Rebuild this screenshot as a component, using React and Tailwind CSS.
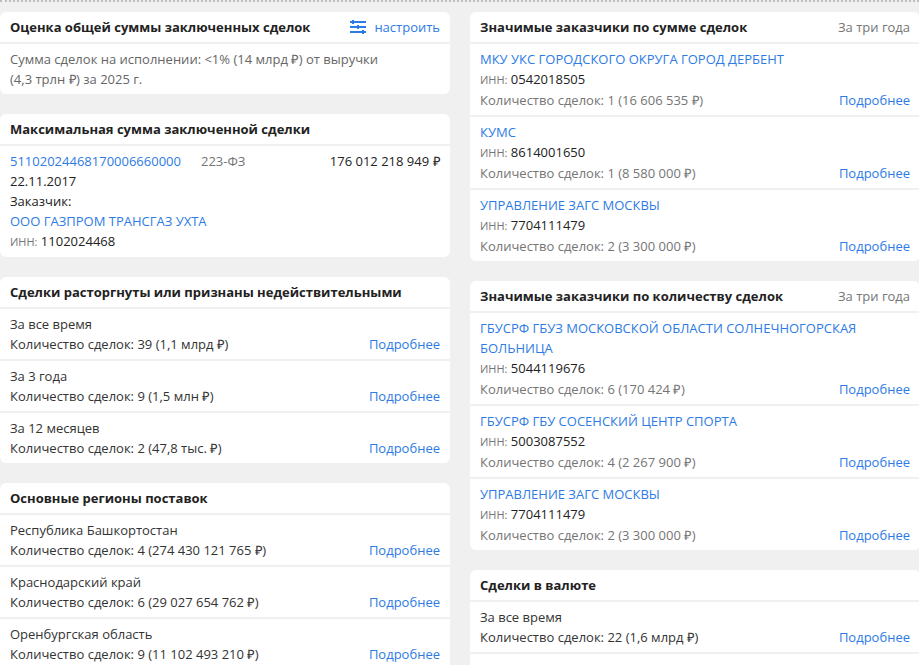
import React from 'react';

// the ruble glyph is a touch narrower in the original
const Ruble = () => <span className="tracking-[-0.5px]">₽</span>;

const Card = ({ title, right, children }) => (
  <div className="bg-white rounded-[6px] overflow-hidden mb-5">
    <div className="flex justify-between items-center h-[32px] px-[10px] border-b-2 border-[#f0f0f0]">
      <h3 className="font-bold text-[#222222]">{title}</h3>
      {right}
    </div>
    {children}
  </div>
);

const More = () => <a className="text-[#2d7be5]">Подробнее</a>;

const Inn = ({ value }) => (
  <div className="text-[#757575]">
    <span className="text-[11px] leading-none">ИНН:</span> <span className="text-[#222222]">{value}</span>
  </div>
);

// "За все время" + deals count row
const StatRow = ({ label, count, last }) => (
  <div className={`px-[10px] py-[5px] ${last ? '' : 'border-b-2 border-[#f0f0f0]'}`}>
    <div className="text-[#333333]">{label}</div>
    <div className="flex justify-between text-[#333333]">
      <span>{count}</span>
      <More />
    </div>
  </div>
);

const CustomerRow = ({ name, inn, count, last }) => (
  <div className={`px-[10px] py-[5px] ${last ? '' : 'border-b-2 border-[#f0f0f0]'}`}>
    <a className="block text-[#2d7be5]">{name}</a>
    <Inn value={inn} />
    <div className="flex justify-between text-[#757575] mt-px">
      <span>{count}</span>
      <More />
    </div>
  </div>
);

const SettingsIcon = () => (
  <svg width="16" height="14" viewBox="0 0 16 14" className="mr-[8px]" fill="#2d7be5">
    <rect x="0" y="1" width="16" height="2" />
    <rect x="0" y="6" width="16" height="2" />
    <rect x="0" y="11" width="16" height="2" />
    <rect x="2" y="0" width="2" height="4" />
    <rect x="7" y="5" width="2" height="4" />
    <rect x="12" y="10" width="2" height="4" />
  </svg>
);

export default function App() {
  return (
    <div className="h-[665px] w-[919px] overflow-hidden bg-[#f0f0f0] text-[13px] leading-5 font-['Open_Sans',sans-serif]">
      <div className="border-t-2 border-dotted border-[#bdbdbd]" />
      <div className="flex gap-5 w-[920px] pt-[10px]">
        <div className="w-[450px] shrink-0">
          <Card
            title="Оценка общей суммы заключенных сделок"
            right={
              <div className="flex items-center">
                <SettingsIcon />
                <a className="text-[#2d7be5]">настроить</a>
              </div>
            }
          >
            <div className="px-[10px] py-[5px] text-[#666666]">
              Сумма сделок на исполнении: &lt;1% (14 млрд <Ruble />) от выручки
              <br />
              (4,3 трлн <Ruble />) за 2025 г.
            </div>
          </Card>

          <Card title="Максимальная сумма заключенной сделки">
            <div className="px-[10px] pt-[5px] pb-[6px] text-[#222222]">
              <div className="flex">
                <a className="text-[#2d7be5] w-[191px]">51102024468170006660000</a>
                <span className="text-[#757575]">223-ФЗ</span>
                <span className="ml-auto">176 012 218 949 <Ruble /></span>
              </div>
              <div>22.11.2017</div>
              <div>Заказчик:</div>
              <a className="block text-[#2d7be5]">ООО ГАЗПРОМ ТРАНСГАЗ УХТА</a>
              <Inn value="1102024468" />
            </div>
          </Card>

          <Card title="Сделки расторгнуты или признаны недействительными">
            <StatRow label="За все время" count={<>Количество сделок: 39 (1,1 млрд <Ruble />)</>} />
            <StatRow label="За 3 года" count={<>Количество сделок: 9 (1,5 млн <Ruble />)</>} />
            <StatRow label="За 12 месяцев" count={<>Количество сделок: 2 (47,8 тыс. <Ruble />)</>} last />
          </Card>

          <Card title="Основные регионы поставок">
            <StatRow label="Республика Башкортостан" count={<>Количество сделок: 4 (274 430 121 765 <Ruble />)</>} />
            <StatRow label="Краснодарский край" count={<>Количество сделок: 6 (29 027 654 762 <Ruble />)</>} />
            <StatRow label="Оренбургская область" count={<>Количество сделок: 9 (11 102 493 210 <Ruble />)</>} last />
          </Card>
        </div>

        <div className="w-[450px] shrink-0">
          <Card
            title="Значимые заказчики по сумме сделок"
            right={<span className="text-[#757575]">За три года</span>}
          >
            <CustomerRow name="МКУ УКС ГОРОДСКОГО ОКРУГА ГОРОД ДЕРБЕНТ" inn="0542018505" count={<>Количество сделок: 1 (16 606 535 <Ruble />)</>} />
            <CustomerRow name="КУМС" inn="8614001650" count={<>Количество сделок: 1 (8 580 000 <Ruble />)</>} />
            <CustomerRow name="УПРАВЛЕНИЕ ЗАГС МОСКВЫ" inn="7704111479" count={<>Количество сделок: 2 (3 300 000 <Ruble />)</>} last />
          </Card>

          <Card
            title="Значимые заказчики по количеству сделок"
            right={<span className="text-[#757575]">За три года</span>}
          >
            <CustomerRow name="ГБУСРФ ГБУЗ МОСКОВСКОЙ ОБЛАСТИ СОЛНЕЧНОГОРСКАЯ БОЛЬНИЦА" inn="5044119676" count={<>Количество сделок: 6 (170 424 <Ruble />)</>} />
            <CustomerRow name="ГБУСРФ ГБУ СОСЕНСКИЙ ЦЕНТР СПОРТА" inn="5003087552" count={<>Количество сделок: 4 (2 267 900 <Ruble />)</>} />
            <CustomerRow name="УПРАВЛЕНИЕ ЗАГС МОСКВЫ" inn="7704111479" count={<>Количество сделок: 2 (3 300 000 <Ruble />)</>} last />
          </Card>

          <Card title="Сделки в валюте">
            <StatRow label="За все время" count={<>Количество сделок: 22 (1,6 млрд <Ruble />)</>} />
            <div className="h-[50px]" />
          </Card>
        </div>
      </div>
    </div>
  );
}
